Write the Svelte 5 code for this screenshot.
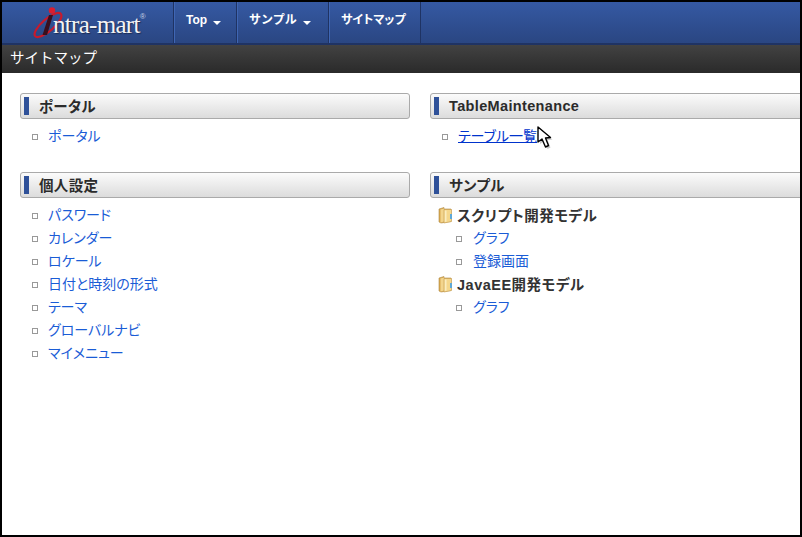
<script lang="ts">
  const navItems = [
    { label: 'Top', caret: true, width: 63, tight: false },
    { label: 'サンプル', caret: true, width: 92, tight: false },
    { label: 'サイトマップ', caret: false, width: 92, tight: true },
  ];

  const left = [
    { title: 'ポータル', links: ['ポータル'] },
    {
      title: '個人設定',
      links: ['パスワード', 'カレンダー', 'ロケール', '日付と時刻の形式', 'テーマ', 'グローバルナビ', 'マイメニュー'],
    },
  ];

  const samples = [
    { name: 'スクリプト開発モデル', links: ['グラフ', '登録画面'] },
    { name: 'JavaEE開発モデル', links: ['グラフ'] },
  ];
</script>

{#snippet heading(title: string, latin = false)}
  <div class="heading"><span class="tick"></span><h2 class:latin>{title}</h2></div>
{/snippet}

{#snippet folder()}
  <svg class="folder" width="15" height="17" viewBox="0 0 15 17">
    <path d="M1 2 L6 0.5 L6 2 L13 2 L13 14.5 L3 16 L1 15 Z" fill="#d9a94e" stroke="#b08a45" stroke-width="0.6" />
    <path d="M2.5 2.5 L6 1.5 L6 14.5 L2.5 15.5 Z" fill="#f3d58d" />
    <path d="M6 2.5 L13.5 2.5 L13.5 14.5 L6 16 Z" fill="#f5d78c" stroke="#c49c52" stroke-width="0.6" />
    <path d="M6.8 3.5 L8.5 3.5 L8.5 14.5 L6.8 15 Z" fill="#fbedc0" />
    <path d="M12 7 L14 7 L14 12 L12 12 Z" fill="#5fa8d6" />
  </svg>
{/snippet}

<div class="frame">
  <nav class="nav">
    <div class="brand">
      <svg class="swoosh" width="48" height="38" viewBox="0 0 48 38">
        <ellipse cx="16" cy="20" rx="6" ry="17" transform="rotate(49 16 20)" fill="none" stroke="#c81a2c" stroke-width="2.2" />
        <circle cx="20" cy="5.5" r="3.2" fill="#d81e30" />
        <path d="M17 10 L21 10 L15 30 L10.5 30 Z" fill="#3a0f1e" />
      </svg>
      <span class="wordmark">ntra-mart</span><sup class="reg">®</sup>
    </div>
    {#each navItems as item}
      <a class="nav-item" class:tight={item.tight} style="width: {item.width}px">
        {item.label}{#if item.caret}<span class="caret"></span>{/if}
      </a>
    {/each}
  </nav>
  <div class="titlebar">サイトマップ</div>

  <main class="columns">
    <div class="col">
      {#each left as section}
        <section>
          {@render heading(section.title)}
          <ul>
            {#each section.links as link}
              <li><a>{link}</a></li>
            {/each}
          </ul>
        </section>
      {/each}
    </div>
    <div class="col">
      <section>
        {@render heading('TableMaintenance', true)}
        <ul>
          <li>
            <a class="hover">テーブル一覧</a>
            <svg class="cursor" width="20" height="26" viewBox="0 0 20 26">
              <path d="M1 1 L1 16 L5 13 L8.5 21 L11.5 19.5 L8.5 12 L13.5 11.5 Z" fill="#000" opacity="0.22" transform="translate(2 2)" />
              <path d="M1 1 L1 16 L5 13 L8.5 21 L11.5 19.5 L8.5 12 L13.5 11.5 Z" fill="#fff" stroke="#000" stroke-width="1.4" stroke-linejoin="round" />
            </svg>
          </li>
        </ul>
      </section>
      <section>
        {@render heading('サンプル')}
        <div class="tree">
          {#each samples as group}
            <div class="group">{@render folder()}<span>{group.name}</span></div>
            <ul class="sub">
              {#each group.links as link}
                <li><a>{link}</a></li>
              {/each}
            </ul>
          {/each}
        </div>
      </section>
    </div>
  </main>
</div>

<style>
  :global(body) {
    margin: 0;
    background: #000;
  }
  .frame {
    box-sizing: border-box;
    width: 802px;
    height: 537px;
    border: 2px solid #000;
    background: #fff;
    overflow: hidden;
    font-family: "Liberation Sans", "Noto Sans CJK JP", sans-serif;
    font-feature-settings: "palt";
    display: flex;
    flex-direction: column;
  }
  .nav {
    display: flex;
    height: 43px;
    flex: none;
    box-sizing: border-box;
    border-bottom: 2px solid #1f3363;
    background: linear-gradient(#3559a3, #2a4682);
  }
  .brand {
    position: relative;
    width: 172px;
    flex: none;
    box-sizing: border-box;
    padding: 8px 0 0 51px;
    border-right: 1px solid #1f3363;
    color: #fff;
    display: flex;
  }
  .swoosh {
    position: absolute;
    left: 30px;
    top: 3px;
  }
  .wordmark {
    font-family: "Liberation Serif", serif;
    font-size: 25px;
    line-height: 30px;
    letter-spacing: -0.7px;
    color: #f4f4f4;
    text-shadow: 1px 1px 1px #1c2d55;
    position: relative;
  }
  .reg {
    font-size: 8px;
    line-height: 10px;
    margin: 2px 0 0 0;
    color: #c9d2e4;
  }
  .nav-item {
    box-sizing: border-box;
    flex: none;
    padding-top: 11px;
    padding-left: 11px;
    font-size: 12px;
    font-weight: 700;
    font-feature-settings: normal;
    line-height: 14px;
    color: #fff;
    border-left: 1px solid #3f66b4;
    border-right: 1px solid #1f3363;
  }
  .nav-item.tight {
    font-feature-settings: "palt";
  }
  .caret {
    display: inline-block;
    margin-left: 6px;
    vertical-align: -1px;
    border-top: 4px solid #fff;
    border-left: 4px solid transparent;
    border-right: 4px solid transparent;
  }
  .titlebar {
    height: 28px;
    flex: none;
    box-sizing: border-box;
    padding: 4px 0 0 8px;
    font-size: 14.5px;
    font-feature-settings: normal;
    line-height: 18px;
    color: #fff;
    background: linear-gradient(#424242, #2a2a2a);
  }
  .columns {
    display: grid;
    grid-template-columns: 390px 390px;
    gap: 20px;
    padding: 20px 0 0 18px;
  }
  section {
    margin-bottom: 24px;
  }
  .heading {
    box-sizing: border-box;
    display: flex;
    align-items: center;
    height: 26px;
    padding: 0 3px;
    border: 1px solid #aaa;
    border-radius: 3px;
    background: linear-gradient(#fbfbfb, #dcdcdc);
  }
  .tick {
    width: 5px;
    height: 18px;
    background: #2f5199;
  }
  h2 {
    margin: 0 0 2px 10px;
    font-size: 14.5px;
    font-weight: 700;
    letter-spacing: 0.35px;
    color: #2b2b2b;
  }
  h2.latin {
    margin-bottom: 0;
  }
  ul {
    list-style: none;
    margin: 0;
    padding: 6px 0 0 12px;
  }
  li {
    position: relative;
    height: 23px;
    padding-left: 16px;
    font-size: 14px;
    line-height: 23px;
  }
  li::before {
    content: '';
    position: absolute;
    left: 0;
    top: 9px;
    width: 4px;
    height: 4px;
    border: 1px solid #999;
  }
  li a {
    color: #1a5cd6;
  }
  li a.hover {
    text-decoration: underline;
    color: #0033cc;
  }
  .cursor {
    position: absolute;
    left: 95px;
    top: 1px;
  }
  .tree {
    padding: 6px 0 0 8px;
  }
  .group {
    display: flex;
    align-items: center;
    box-sizing: border-box;
    height: 23px;
    padding-bottom: 3px;
    font-size: 14.5px;
    font-weight: 700;
    letter-spacing: 0.5px;
    color: #333;
  }
  .folder {
    flex: none;
    margin: 3px 4px 0 0;
  }
  .sub {
    padding: 0 0 0 18px;
  }
  .sub li {
    padding-left: 17px;
  }
</style>
